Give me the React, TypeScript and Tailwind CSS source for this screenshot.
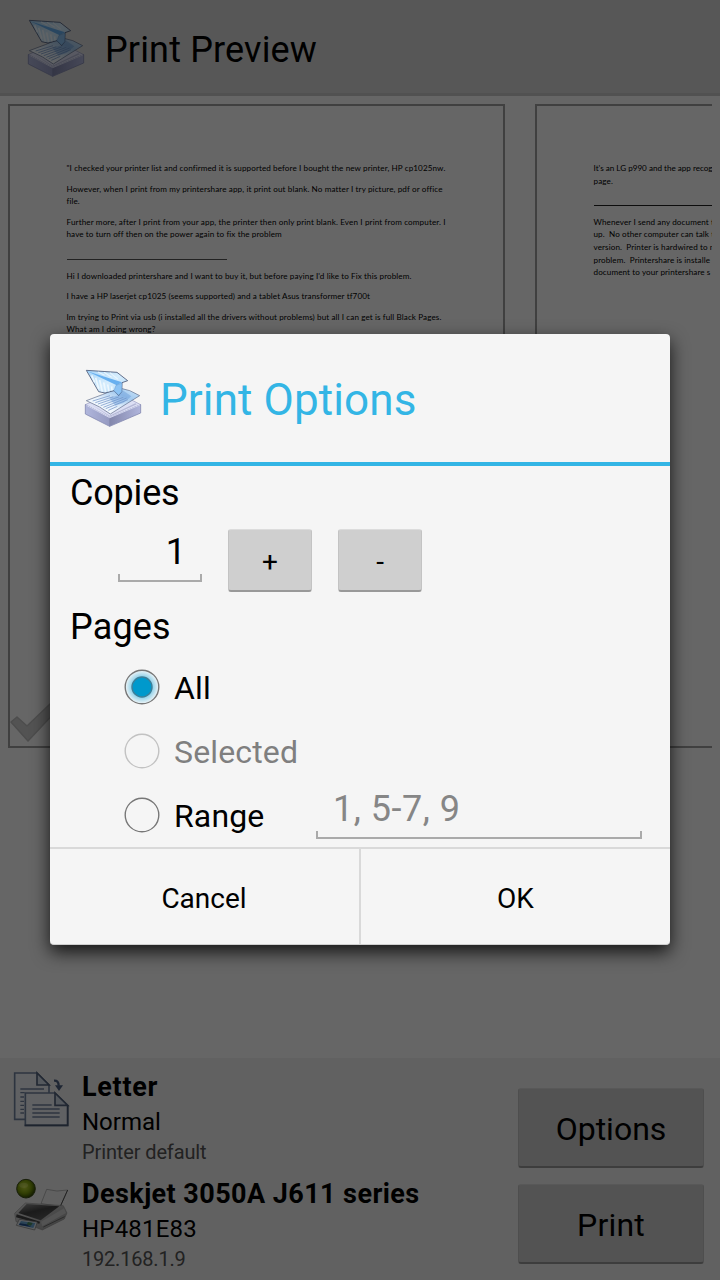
import { useState } from "react";
import clsx from "clsx";

interface DocLine {
  text: string;
  className?: string;
}

const firstPage: DocLine[][] = [
  [
    {
      text: "\"I checked your printer list and confirmed it is supported before I bought the new printer, HP cp1025nw.",
    },
  ],
  [
    {
      text: "However, when I print from my printershare app, it print out blank. No matter I try picture, pdf or office",
      className: "tracking-[0.115px]",
    },
    { text: "file." },
  ],
  [
    {
      text: "Further more, after I print from your app, the printer then only print blank. Even I print from computer. I",
      className: "tracking-[0.135px]",
    },
    { text: "have to turn off then on the power again to fix the problem" },
  ],
  [{ text: "", className: "w-40 bg-[#555555]" }],
  [
    {
      text: "Hi I downloaded printershare and I want to buy it, but before paying I'd like to Fix this problem.",
    },
  ],
  [
    {
      text: "I have a HP laserjet cp1025 (seems supported) and a tablet Asus transformer tf700t",
    },
  ],
  [
    {
      text: "Im trying to Print via usb (i installed all the drivers without problems) but all I can get is full Black Pages.",
    },
    { text: "What am I doing wrong?" },
  ],
];

const secondPage: DocLine[][] = [
  [
    { text: "It's an LG p990 and the app recog", className: "tracking-normal" },
    { text: "page." },
  ],
  [{ text: "", className: "w-40 bg-[#222222]" }],
  [
    { text: "Whenever I send any document t" },
    { text: "up.  No other computer can talk t" },
    { text: "version.  Printer is hardwired to m" },
    { text: "problem.  Printershare is installe" },
    { text: "document to your printershare s" },
  ],
];

const options = [
  { id: "all", label: "All", disabled: false },
  { id: "selected", label: "Selected", disabled: true },
  { id: "range", label: "Range", disabled: false },
];

const AppIcon = ({ className }: { className?: string }) => (
  <svg viewBox="36 36 192 192" className={clsx("h-16 w-16", className)}>
    <defs>
      <linearGradient id="trayLeft" x1="0" y1="0" x2="1" y2="0">
        <stop offset="0" stopColor="#b0b6dc" />
        <stop offset="1" stopColor="#959ac1" />
      </linearGradient>
      <linearGradient id="trayRight" x1="0" y1="0" x2="1" y2="0">
        <stop offset="0" stopColor="#8286ab" />
        <stop offset="1" stopColor="#b0b5dc" />
      </linearGradient>
      <linearGradient id="sheet" x1="0" y1="1" x2="1" y2="0">
        <stop offset="0" stopColor="#ffffff" />
        <stop offset="0.4" stopColor="#eaf3fc" />
        <stop offset="0.7" stopColor="#a4caef" />
        <stop offset="1" stopColor="#cfe8fb" />
      </linearGradient>
      <linearGradient id="wing" x1="0" y1="0" x2="1" y2="1">
        <stop offset="0" stopColor="#a6d4f8" />
        <stop offset="0.5" stopColor="#d6edfd" />
        <stop offset="1" stopColor="#aed7f8" />
      </linearGradient>
    </defs>
    <path d="M46 149 L133 108 L212 149 L119 190 Z" fill="#dcdff4" stroke="#9599c0" strokeWidth="2" />
    <path d="M46 149 L119 188 V214 L46 177 Z" fill="url(#trayLeft)" stroke="#858ab2" strokeWidth="2.5" />
    <path d="M119 188 L212 149 V174 L119 214 Z" fill="url(#trayRight)" stroke="#858ab2" strokeWidth="2.5" />
    <path d="M49 151 L119 188 L210 150" fill="none" stroke="#dfe2f6" strokeWidth="2.5" />
    <path d="M66 149 L119 182 L196 145 L200 148 L119 185 Z" fill="#8d92b8" opacity="0.5" />
    <path d="M49 137 Q98 120 145 98 Q182 104 209 122 Q165 149 121 177 Q91 154 49 137 Z" fill="url(#sheet)" stroke="#5d6a86" strokeWidth="2" />
    <g stroke="#86a3d0" strokeWidth="2.6" fill="none">
      <path d="M68 138 L120 122" />
      <path d="M76 143 L130 125" />
      <path d="M84 147 L146 126" />
      <path d="M92 152 L160 127" />
      <path d="M100 157 L170 129" />
      <path d="M107 161 L174 134" />
      <path d="M115 166 L142 154" />
    </g>
    <path d="M118 128 L146 121 L158 106 L184 124 L160 144 L136 152 Z" fill="#4f86cc" opacity="0.32" />
    <path d="M49 46 L141 52 L173 77 L156 83 L155 110 L146 122 L132 107 L105 114 L86 110 Z" fill="url(#wing)" stroke="#4f5c7a" strokeWidth="2.6" strokeLinejoin="round" />
    <path d="M52 49 L156 82 L140 91 Z" fill="#68b0f0" />
    <path d="M138 91 L156 84 L155 110 L146 121 L132 107 Z" fill="#8cc3f4" stroke="#5b8cc2" strokeWidth="1.2" />
    <g stroke="#f4fbff" strokeWidth="5" opacity="0.85">
      <path d="M65 61 L74 82" />
      <path d="M77 68 L86 101" />
      <path d="M89 75 L97 110" />
      <path d="M101 82 L107 111" />
      <path d="M113 88 L117 109" />
      <path d="M125 94 L126 106" />
    </g>
    <g stroke="#f4fbff" strokeWidth="3.5" opacity="0.75">
      <path d="M84 51 L104 61" />
      <path d="M102 52 L125 67" />
      <path d="M120 53 L144 73" />
    </g>
  </svg>
);

const PaperIcon = () => (
  <svg viewBox="36 30 180 180" className="h-[60px] w-[60px] shrink-0">
    <g fill="#f0f3f8" stroke="#71839f" strokeWidth="5">
      <path d="M44 39 H111 L147 75 V178 H44 Z" />
      <path d="M111 39 V75 H147 Z" fill="#d3dbe8" stroke="#55657f" />
      <path d="M61 87 H132 M61 98 H74 M61 111 H72 M61 124 H72 M61 136 H72 M61 148 H72 M61 159 H72" strokeWidth="4" />
      <path d="M76 99 H165 L203 136 V196 H76 Z" />
      <path d="M165 99 V136 H203 Z" fill="#d3dbe8" stroke="#55657f" />
      <path d="M97 135 H155 M97 147 H179 M97 159 H179 M97 171 H179" stroke="#71839f" strokeWidth="4" />
      <path d="M74 196 H203 V136" fill="none" stroke="#4c5a73" />
    </g>
    <path d="M162 62 Q176 61 176 77" fill="none" stroke="#4c5f80" strokeWidth="7" />
    <path d="M165 76 H189 L177 93 Z" fill="#4c5f80" />
  </svg>
);

const PrinterIcon = () => (
  <svg viewBox="36 30 180 180" className="h-[60px] w-[60px] shrink-0">
    <defs>
      <radialGradient id="led" cx="0.42" cy="0.4" r="0.6">
        <stop offset="0" stopColor="#c6dd38" />
        <stop offset="0.6" stopColor="#7c9c0c" />
        <stop offset="1" stopColor="#344a04" />
      </radialGradient>
      <linearGradient id="lid" x1="0" y1="0" x2="0.6" y2="1">
        <stop offset="0" stopColor="#9a9a9a" />
        <stop offset="0.5" stopColor="#444444" />
        <stop offset="1" stopColor="#606060" />
      </linearGradient>
      <linearGradient id="body" x1="0" y1="0" x2="1" y2="1">
        <stop offset="0" stopColor="#e0e0e0" />
        <stop offset="1" stopColor="#9a9a9a" />
      </linearGradient>
    </defs>
    <path d="M140 73 Q170 82 203 75 L181 124 L123 116 Z" fill="#efefef" stroke="#999999" strokeWidth="2" />
    <path d="M203 75 L181 124" stroke="#555555" strokeWidth="3" />
    <path d="M44 145 L76 114 L190 122 L201 144 L193 162 L127 195 L104 186 L48 170 Z" fill="url(#body)" stroke="#8a8a8a" strokeWidth="1.5" />
    <path d="M55 144 L80 117 L178 124 L122 166 Z" fill="url(#lid)" />
    <path d="M50 148 L120 170 L118 176 L48 157 Z" fill="#444444" />
    <path d="M123 170 L192 130 L198 144 L127 184 Z" fill="#cfcfcf" />
    <path d="M130 186 L194 155" stroke="#6c6c6c" strokeWidth="3" />
    <path d="M58 163 L112 171 L104 195 L49 181 Z" fill="#e6ebf0" stroke="#777777" strokeWidth="2" />
    <path d="M63 168 L106 174 L100 189 L56 179 Z" fill="#6ca8d8" />
    <path d="M84 171 L98 174 L93 182 L80 179 Z" fill="#4b8a5e" />
    <path d="M60 175 L80 178 L94 186 L57 180 Z" fill="#25508f" />
    <circle cx="78" cy="71" r="28" fill="url(#led)" stroke="#3b4a18" strokeWidth="3" />
    <ellipse cx="71" cy="61" rx="13" ry="8" fill="#edf7a0" opacity="0.3" />
  </svg>
);

const PreviewPage = ({ paragraphs }: { paragraphs: DocLine[][] }) => (
  <div className="relative h-[644px] w-[497px] shrink-0 border-2 border-[#a0a0a0] bg-white pt-[56px] pl-[56.5px]">
    {paragraphs.map((lines, i) => (
      <div
        key={i}
        className="mb-2 font-['Lato'] text-[8.1px] leading-[12.6px] tracking-[0.1px] whitespace-pre text-black"
      >
        {lines.map((line, j) =>
          line.text ? (
            <p key={j} className={line.className}>
              {line.text}
            </p>
          ) : (
            <div key={j} className="flex h-[12.6px] items-end pb-[1.6px]">
              <div className={clsx("h-px", line.className)} />
            </div>
          )
        )}
      </div>
    ))}
  </div>
);

const Radio = ({ checked, disabled }: { checked: boolean; disabled: boolean }) => (
  <svg
    viewBox="0 0 36 36"
    className={clsx("h-9 w-9 shrink-0", disabled && "opacity-40")}
  >
    <defs>
      <radialGradient id="glow">
        <stop offset="0.6" stopColor="#8fd0e8" />
        <stop offset="1" stopColor="#f0f5f7" />
      </radialGradient>
    </defs>
    <circle cx="18" cy="18" r="16.8" fill={checked ? "url(#glow)" : "none"} stroke="#777777" strokeWidth="1.4" />
    {checked && (
      <circle cx="18" cy="18" r="10" fill="#0099cc" stroke="#3d7f98" strokeWidth="1.4" />
    )}
  </svg>
);

const Underline = ({ className }: { className?: string }) => (
  <div className={clsx("h-2 border-x-2 border-b-2 border-[#aaaaaa]", className)} />
);

const holoButton =
  "flex items-center justify-center rounded-[3px] border-x border-t border-b-2 border-x-[#c3c3c3] border-t-[#dcdcdc] border-b-[#999999] bg-[#cfcfcf]";

const App = () => {
  const [copies, setCopies] = useState<number>(1);
  const [selected, setSelected] = useState<string>("all");

  return (
    <div className="relative flex h-[1280px] w-[720px] flex-col overflow-hidden bg-white font-['Roboto',sans-serif] text-black">
      <header className="flex h-24 items-center border-b-[3px] border-[#cacaca] bg-[#dadada] pl-[25px]">
        <AppIcon className="mt-1" />
        <h1 className="ml-4 pt-[7px] text-4xl leading-none tracking-[0.15px]">Print Preview</h1>
      </header>

      <main className="mx-2 flex flex-1 items-start gap-[30px] overflow-hidden pt-2">
        <div className="relative">
          <PreviewPage paragraphs={firstPage} />
          <svg viewBox="0 0 60 44" className="absolute bottom-1 left-0 h-11 w-[60px]">
            <path d="M3 22 L9 17 L19 26 L42 4 L50 9 L20 41 Z" fill="#d0d0d0" stroke="#c0c0c0" strokeWidth="1.5" strokeLinejoin="round" />
          </svg>
        </div>
        <PreviewPage paragraphs={secondPage} />
      </main>

      <footer className="flex h-[222px] justify-between bg-[#f3f3f3] pr-4 pl-3">
        <div>
          <div className="flex h-[107px] pt-2.5">
            <div className="pt-0.5">
              <PaperIcon />
            </div>
            <div className="ml-2.5">
              <p className="h-[38px] text-[27px] leading-[39px] font-bold tracking-[0.7px]">Letter</p>
              <p className="text-2xl leading-8">Normal</p>
              <p className="text-xl leading-7 tracking-[-0.12px] text-[#555555]">Printer default</p>
            </div>
          </div>
          <div className="flex h-[107px] pt-2.5">
            <PrinterIcon />
            <div className="ml-2.5">
              <p className="h-[38px] text-[27px] leading-[39px] font-bold tracking-[0.43px]">Deskjet 3050A J611 series</p>
              <p className="text-2xl leading-8 tracking-[0.2px]">HP481E83</p>
              <p className="text-xl leading-7 tracking-[-0.2px] text-[#555555]">192.168.1.9</p>
            </div>
          </div>
        </div>
        <div className="flex flex-col gap-4 pt-[30px]">
          <button className={clsx(holoButton, "h-20 w-[186px] pt-0.5 text-[32px]")}>Options</button>
          <button className={clsx(holoButton, "h-20 w-[186px] pt-0.5 text-[32px] tracking-[0.2px]")}>Print</button>
        </div>
      </footer>

      <div className="absolute inset-0 bg-black/60 px-[50px] pt-[334px]">
        <section className="flex h-[611px] flex-col overflow-hidden rounded-[4px] border-b border-[#cfcfcf] bg-[#f5f5f5] shadow-[0_7px_18px_0_rgba(0,0,0,0.8)]">
          <div className="flex h-[132px] items-center border-b-4 border-[#33b5e5] pl-8">
            <AppIcon className="mt-0.5" />
            <h2 className="ml-3.5 pt-1 text-[44px] leading-none tracking-[0.1px] text-[#33b5e5]">Print Options</h2>
          </div>

          <div className="h-[381px] shrink-0 pl-5">
            <h3 className="text-4xl leading-[54px] tracking-[-0.2px]">Copies</h3>
            <div className="flex h-20 pt-[9px] pl-12">
              <div className="w-[84px]">
                <div className="h-[45px] pr-4 text-right text-4xl leading-[47px]">{copies}</div>
                <Underline />
              </div>
              <button
                className={clsx(holoButton, "ml-[26px] h-[63px] w-[84px] pt-[3px] text-[28px]")}
                onClick={() => setCopies(copies + 1)}
              >
                +
              </button>
              <button
                className={clsx(holoButton, "ml-[26px] h-[63px] w-[84px] pt-[3px] text-[28px]")}
                onClick={() => setCopies(Math.max(1, copies - 1))}
              >
                -
              </button>
            </div>
            <h3 className="h-[55px] text-4xl leading-[54px] tracking-[0.15px]">Pages</h3>
            {options.map((option) => (
              <div key={option.id} className="flex h-16 items-center pl-[54px]">
                <label
                  className="flex items-center"
                  onClick={() => !option.disabled && setSelected(option.id)}
                >
                  <Radio checked={selected === option.id} disabled={option.disabled} />
                  <span
                    className={clsx(
                      "ml-3.5 w-[142px] pt-0.5 text-[32px] leading-10 tracking-[0.15px]",
                      option.disabled && "text-[#7f7f7f]"
                    )}
                  >
                    {option.label}
                  </span>
                </label>
                {option.id === "range" && (
                  <div className="mb-1.5 w-[326px]">
                    <div className="h-[45px] pl-[17px] text-4xl leading-[47px] tracking-[0.5px] text-[#868686]">
                      1, 5-7, 9
                    </div>
                    <Underline />
                  </div>
                )}
              </div>
            ))}
          </div>

          <div className="flex flex-1 border-t-2 border-[#d9d9d9] text-[28px]">
            <button className="w-[311px] border-r-2 border-[#d9d9d9] pt-[5px] pr-px">Cancel</button>
            <button className="flex-1 pt-[5px]">OK</button>
          </div>
        </section>
      </div>
    </div>
  );
};

export default App;
